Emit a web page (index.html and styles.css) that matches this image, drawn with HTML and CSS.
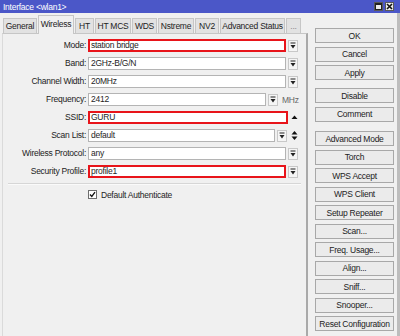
FILE: index.html
```html
<!DOCTYPE html>
<html>
<head>
<meta charset="utf-8">
<link rel="stylesheet" href="styles.css">
</head>
<body>
<div class="window">
  <div class="titlebar">
    <span class="title">Interface &lt;wlan1&gt;</span>
    <div class="winbtns">
      <span class="wb"><svg width="7" height="7" viewBox="0 0 7 7"><rect x="0.5" y="0.5" width="6" height="6" fill="none" stroke="#222" stroke-width="1"/><line x1="0" y1="1.5" x2="7" y2="1.5" stroke="#222"/></svg></span>
      <span class="wb"><svg width="7" height="7" viewBox="0 0 7 7"><path d="M1 1 L6 6 M6 1 L1 6" stroke="#111" stroke-width="1.6"/></svg></span>
    </div>
  </div>
  <div class="main">
    <div class="left">
      <div class="tabs">
        <div class="tab">General</div>
        <div class="tab active">Wireless</div>
        <div class="tab">HT</div>
        <div class="tab">HT MCS</div>
        <div class="tab">WDS</div>
        <div class="tab">Nstreme</div>
        <div class="tab">NV2</div>
        <div class="tab">Advanced Status</div>
        <div class="tab">...</div>
      </div>
      <div class="panel">
        <div class="form">
          <div class="lbl">Mode:</div>
          <div class="field"><div class="input red">station bridge</div><span class="dd"><svg width="6" height="7" viewBox="0 0 6 7"><rect x="0.5" y="0.5" width="5" height="1" fill="#222"/><path d="M0.5 3 L5.5 3 L3 6.5 Z" fill="#222"/></svg></span></div>

          <div class="lbl">Band:</div>
          <div class="field"><div class="input">2GHz-B/G/N</div><span class="dd"><svg width="6" height="7" viewBox="0 0 6 7"><rect x="0.5" y="0.5" width="5" height="1" fill="#222"/><path d="M0.5 3 L5.5 3 L3 6.5 Z" fill="#222"/></svg></span></div>

          <div class="lbl">Channel Width:</div>
          <div class="field"><div class="input">20MHz</div><span class="dd"><svg width="6" height="7" viewBox="0 0 6 7"><rect x="0.5" y="0.5" width="5" height="1" fill="#222"/><path d="M0.5 3 L5.5 3 L3 6.5 Z" fill="#222"/></svg></span></div>

          <div class="lbl">Frequency:</div>
          <div class="field"><div class="input">2412</div><span class="dd"><svg width="6" height="7" viewBox="0 0 6 7"><rect x="0.5" y="0.5" width="5" height="1" fill="#222"/><path d="M0.5 3 L5.5 3 L3 6.5 Z" fill="#222"/></svg></span><span class="unit">MHz</span></div>

          <div class="lbl">SSID:</div>
          <div class="field"><div class="input red">GURU</div><span class="arrow"><svg width="7" height="11" viewBox="0 0 7 11"><path d="M0.5 7 L6.5 7 L3.5 3.5 Z" fill="#111"/></svg></span></div>

          <div class="lbl">Scan List:</div>
          <div class="field"><div class="input">default</div><span class="dd"><svg width="6" height="7" viewBox="0 0 6 7"><rect x="0.5" y="0.5" width="5" height="1" fill="#222"/><path d="M0.5 3 L5.5 3 L3 6.5 Z" fill="#222"/></svg></span><span class="arrow ud"><svg width="7" height="11" viewBox="0 0 7 11"><path d="M0.5 4.5 L6.5 4.5 L3.5 1 Z" fill="#111"/><path d="M0.5 6.5 L6.5 6.5 L3.5 10 Z" fill="#111"/></svg></span></div>

          <div class="lbl">Wireless Protocol:</div>
          <div class="field"><div class="input">any</div><span class="dd"><svg width="6" height="7" viewBox="0 0 6 7"><rect x="0.5" y="0.5" width="5" height="1" fill="#222"/><path d="M0.5 3 L5.5 3 L3 6.5 Z" fill="#222"/></svg></span></div>

          <div class="lbl">Security Profile:</div>
          <div class="field"><div class="input red">profile1</div><span class="dd"><svg width="6" height="7" viewBox="0 0 6 7"><rect x="0.5" y="0.5" width="5" height="1" fill="#222"/><path d="M0.5 3 L5.5 3 L3 6.5 Z" fill="#222"/></svg></span></div>
        </div>
        <div class="sep"></div>
        <div class="checkrow">
          <span class="cb"><svg width="7" height="7" viewBox="0 0 7 7"><path d="M1 3.5 L2.8 5.5 L6 1.2" fill="none" stroke="#111" stroke-width="1.3"/></svg></span>
          <span>Default Authenticate</span>
        </div>
      </div>
    </div>
    <div class="right">
      <div class="group">
        <div class="btn">OK</div>
        <div class="btn">Cancel</div>
        <div class="btn">Apply</div>
      </div>
      <div class="group g2">
        <div class="btn">Disable</div>
        <div class="btn">Comment</div>
      </div>
      <div class="group g3">
        <div class="btn">Advanced Mode</div>
        <div class="btn">Torch</div>
        <div class="btn">WPS Accept</div>
        <div class="btn">WPS Client</div>
        <div class="btn">Setup Repeater</div>
        <div class="btn">Scan...</div>
        <div class="btn">Freq. Usage...</div>
        <div class="btn">Align...</div>
        <div class="btn">Sniff...</div>
        <div class="btn">Snooper...</div>
        <div class="btn">Reset Configuration</div>
      </div>
    </div>
  </div>
</div>
</body>
</html>
```
FILE: styles.css
```css
* { box-sizing: border-box; }
html, body { margin: 0; padding: 0; }
body {
  width: 400px;
  height: 336px;
  overflow: hidden;
  background: #f0f0f0;
  font-family: "Liberation Sans", Arial, sans-serif;
  font-size: 8.5px;
  letter-spacing: -0.25px;
  color: #1e1e1e;
}
.window { display: flex; flex-direction: column; height: 336px; }
.titlebar {
  height: 13px;
  background: #4b57c8;
  color: #fff;
  display: flex;
  align-items: center;
  justify-content: space-between;
  padding: 0 6px 0 3px;
}
.winbtns { display: flex; gap: 2px; }
.wb {
  width: 9px; height: 9px;
  background: #ececec;
  border: 1px solid #5a5a5a;
  display: flex; align-items: center; justify-content: center;
}
.wb svg { display: block; }
.main { flex: 1; display: flex; border-right: 3px solid #bdbdbd; }
.left { width: 308px; display: flex; flex-direction: column; }
.tabs {
  height: 20px;
  display: flex;
  align-items: flex-end;
  gap: 1px;
  padding-left: 3px;
}
.tab {
  height: 15px;
  background: #e2e2e2;
  border: 1px solid #c6c6c6;
  border-bottom: none;
  display: flex; align-items: center; justify-content: center;
  white-space: nowrap;
  color: #222;
}
.tab:nth-child(1) { width: 34px; }
.tab:nth-child(2) { width: 36px; }
.tab:nth-child(3) { width: 19px; }
.tab:nth-child(4) { width: 36px; }
.tab:nth-child(5) { width: 25px; }
.tab:nth-child(6) { width: 36px; }
.tab:nth-child(7) { width: 24px; }
.tab:nth-child(8) { width: 65px; }
.tab:nth-child(9) { width: 15px; color: #888; }
.tab.active {
  height: 19px;
  background: #f0f0f0;
  margin-bottom: -1px;
  position: relative;
  z-index: 1;
  padding-bottom: 3px;
}
.panel {
  flex: 1;
  margin-left: 2px;
  border-top: 1px solid #c6c6c6;
  border-left: 1px solid #dadada;
  border-right: 2px solid #a9a9a9;
  padding-top: 5px;
}
.form {
  display: grid;
  grid-template-columns: 83px 210px;
  grid-auto-rows: 13px;
  column-gap: 2px;
  row-gap: 5px;
}
.lbl { text-align: right; line-height: 13px; white-space: nowrap; color: #222; }
.field { display: flex; align-items: center; height: 13px; }
.input {
  flex: 1;
  height: 13px;
  background: #fff;
  border: 1px solid #b4b4b4;
  line-height: 11px;
  padding-left: 2px;
  white-space: nowrap;
  overflow: hidden;
}
.input.red { border: 2px solid #e8141a; line-height: 9px; padding-left: 1px; }
.dd {
  width: 10px; height: 12px;
  margin-left: 2px;
  background: #f5f5f5;
  border: 1px solid #c8c8c8;
  display: flex; align-items: center; justify-content: center;
}
.dd svg, .arrow svg, .cb svg { display: block; }
.unit { width: 16px; margin-left: 4px; color: #666; }
.arrow { width: 7px; margin-left: 3px; display: flex; align-items: center; }
.arrow.ud { margin-left: 4px; }
.sep {
  margin: 5px 5px 0 5px;
  height: 2px;
  border-top: 1px solid #d6d6d6;
  border-bottom: 1px solid #fafafa;
}
.checkrow {
  margin-top: 5px;
  padding-left: 85px;
  display: flex;
  align-items: center;
  gap: 4px;
  height: 9px;
}
.cb {
  width: 9px; height: 9px;
  background: #fff;
  border: 1px solid #6e6e6e;
  display: flex; align-items: center; justify-content: center;
}
.right {
  flex: 1;
  padding: 15px 0 0 7px;
  display: flex;
  flex-direction: column;
}
.group { display: flex; flex-direction: column; gap: 3.5px; }
.g2 { margin-top: 8px; }
.g3 { margin-top: 9.5px; }
.btn {
  width: 79px;
  height: 15px;
  border: 1px solid #a8a8a8;
  background: #ebebeb;
  display: flex; align-items: center; justify-content: center;
  white-space: nowrap;
  color: #222;
}
```
